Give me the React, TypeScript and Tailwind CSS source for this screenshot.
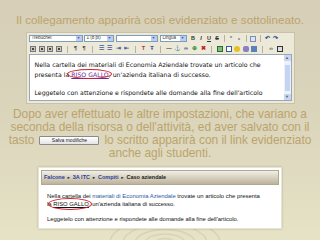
import React from "react";

const Sel = ({ w, label }: { w: string; label: string }) => (
  <div className={`flex h-[7px] items-center border border-[#7f9db9] bg-white ${w}`}>
    <span className="flex-1 truncate pl-[2px] text-[4.5px] leading-none text-[#333]">{label}</span>
    <span className="flex h-full w-[6px] items-center justify-center bg-[#b9cdf5] text-[3.5px] leading-none text-[#3b5a9a]">▼</span>
  </div>
);

const Ic = ({ c, children }: { c?: string; children?: React.ReactNode }) => (
  <span className={`flex h-[7px] w-[7px] items-center justify-center text-[5.5px] font-bold leading-none ${c ?? "text-[#333]"}`}>
    {children}
  </span>
);

const Lines = () => (
  <span className="flex h-[7px] w-[7px] items-center justify-center">
    <span className="flex h-[6px] w-[6px] flex-col justify-between border border-[#777] bg-[#c8c8c8] p-[1px]">
      <span className="h-[1px] bg-[#444]" />
      <span className="h-[1px] bg-[#444]" />
    </span>
  </span>
);

const Box = ({ c }: { c: string }) => (
  <span className="flex h-[7px] w-[7px] items-center justify-center">
    <span className={`h-[6px] w-[6px] ${c}`} />
  </span>
);

const Sep = ({ m }: { m?: string }) => <span className={`${m ?? "mx-[3px]"} h-[7px] w-px bg-[#b5b2a4]`} />;

const Ellipse = ({ cls }: { cls: string }) => (
  <span className={`pointer-events-none absolute rounded-[50%] border-[1.5px] border-[#d0202a] ${cls}`} />
);

export default function App() {
  return (
    <div
      className="relative flex h-[240px] w-[320px] flex-col items-center overflow-hidden bg-gradient-to-b from-[#d7cfb8] via-[#dbd5bc] to-[#e6e3c6]"
      style={{ fontFamily: '"Liberation Sans", Arial, sans-serif' }}
    >
      <svg className="pointer-events-none absolute left-[100px] top-[205px]" width="130" height="50" viewBox="0 0 130 50">
        {[10, 20, 30, 42, 55].map((r) => (
          <ellipse key={r} cx="65" cy="38" rx={r} ry={r * 0.45} fill="none" stroke="#d4cfb3" strokeWidth="1.5" opacity="0.8" />
        ))}
      </svg>

      <p className="relative mt-[13px] whitespace-nowrap text-[11.7px] leading-[14px] text-[#bba46c]">
        Il collegamento apparirà così evidenziato e sottolineato.
      </p>

      {/* Editor screenshot */}
      <div className="relative mt-[5px] flex w-[269px] flex-col border border-[#c9c2a8] bg-[#ece9d8]">
        <div className="flex h-[11px] items-center px-[2px]">
          <Sel w="w-[54px]" label="Trebuchet" />
          <Sel w="w-[30px] ml-[1px]" label="1 (8 pt)" />
          <Sel w="w-[42px] ml-[2px]" label="" />
          <Sel w="w-[27px] ml-[2px]" label="Lingua" />
          <div className="ml-[3px] flex items-center gap-[1px]">
            <Ic>B</Ic>
            <Ic><i>I</i></Ic>
            <Ic><u>U</u></Ic>
            <Ic><s>S</s></Ic>
            <Sep m="mx-[2px]" />
            <Ic c="text-[#555]">ˣ</Ic>
            <Ic c="text-[#555]">ₓ</Ic>
            <Sep m="mx-[2px]" />
            <Box c="border border-[#7a8fb8] bg-[#dde4f2]" />
            <Sep m="mx-[2px]" />
            <Ic c="text-[#2b4f8f]">↶</Ic>
            <Ic c="text-[#2b4f8f]">↷</Ic>
          </div>
        </div>
        <div className="flex h-[10px] items-center gap-[1.5px] px-[3px]">
          <Lines />
          <Lines />
          <Lines />
          <Lines />
          <Sep />
          <Ic c="text-[#444]">¶</Ic>
          <Ic c="text-[#444]">¶</Ic>
          <Sep />
          <Ic c="text-[#3a5aa0]">☰</Ic>
          <Ic c="text-[#3a5aa0]">☰</Ic>
          <Ic c="text-[#3a5aa0]">⇥</Ic>
          <Ic c="text-[#3a5aa0]">⇤</Ic>
          <Sep />
          <Ic c="text-[#b03030]">T</Ic>
          <Ic c="text-[#3050a0]">Ŧ</Ic>
          <Sep />
          <Ic c="text-[#444]">—</Ic>
          <Ic c="text-[#2b4f8f]">⚓</Ic>
          <Ic c="text-[#2b4f8f]">∞</Ic>
          <Ic c="text-[#3a8a3a]">⊕</Ic>
          <Ic c="text-[#c02020]">✖</Ic>
          <Sep />
          <Box c="border border-[#2d6a2d] bg-[#7cc07c]" />
          <Box c="border border-[#3a5aa0] bg-white" />
          <Box c="rounded-full bg-[#e8c020]" />
          <Box c="rounded-[2px] bg-[#8a7fc0]" />
          <Box c="bg-[#5a80c0]" />
          <Sep />
          <Ic c="text-[#444]">‹›</Ic>
          <Box c="border border-[#333] bg-[#ddd]" />
        </div>
        <div className="relative mx-[2px] mb-[2px] h-[47px] border border-[#9aa7b8] bg-white">
          <div
            className="px-[5px] pt-[5px] text-[6.2px] leading-[10px] text-[#111]"
            style={{ fontFamily: '"DejaVu Sans", Verdana, sans-serif' }}
          >
            <p>Nella cartella dei materiali di Economia Aziendale trovate un articolo che</p>
            <p>
              presenta la{" "}
              <span className="relative">
                <span className="text-[#6a2a9a] underline">RISO GALLO</span>
                <Ellipse cls="-left-[4px] -right-[3px] -top-[2px] -bottom-[1px]" />
              </span>
              , un'azienda italiana di successo.
            </p>
            <p className="mt-[8px]">Leggetelo con attenzione e rispondete alle domande alla fine dell'articolo</p>
          </div>
          <div className="absolute bottom-0 right-0 top-0 flex w-[7px] flex-col justify-between bg-[#eef2f8]">
            <span className="flex h-[6px] items-center justify-center bg-[#c8d6f0] text-[4px] text-[#4d6185]">▲</span>
            <span className="mx-[1px] my-[1px] max-h-[26px] flex-1 bg-[#c4d4f2]" />
            <span className="flex h-[6px] items-center justify-center bg-[#c8d6f0] text-[4px] text-[#4d6185]">▼</span>
          </div>
        </div>
      </div>

      <div className="relative mt-[4px] flex w-[310px] flex-col items-center text-[11.9px] leading-[13px] text-[#bba46c]">
        <p className="whitespace-nowrap">Dopo aver effettuato le altre impostazioni, che variano a</p>
        <p className="whitespace-nowrap">seconda della risorsa o dell'attività, ed aver salvato con il</p>
        <div className="flex h-[13px] items-center whitespace-nowrap">
          <span>tasto</span>
          <span className="mx-[5px] flex h-[9px] w-[60px] items-center justify-center rounded-[1px] border border-[#8a8a8a] bg-gradient-to-b from-white to-[#e4e4e4] text-[5px] leading-none text-[#222]">
            Salva modifiche
          </span>
          <span>lo scritto apparirà con il link evidenziato</span>
        </div>
        <p className="whitespace-nowrap">anche agli studenti.</p>
      </div>

      {/* Moodle screenshot */}
      <div className="relative mt-[7px] w-[244px] border border-[#e8e4d8] bg-white shadow-[0_0_2px_rgba(120,110,80,0.4)]">
        <div className="mx-[2px] mt-[2px] flex h-[15px] items-center border border-[#b0a890] bg-gradient-to-b from-[#f3efe6] to-[#bdb39c] px-[2px] text-[5.5px] font-bold leading-none text-[#222]">
          <span className="text-[#2a3f9a]">Falcone</span>
          <span className="mx-[2px] text-[4px]">►</span>
          <span className="text-[#2a3f9a]">3A ITC</span>
          <span className="mx-[2px] text-[4px]">►</span>
          <span className="text-[#2a3f9a]">Compiti</span>
          <span className="mx-[2px] text-[4px]">►</span>
          <span>Caso aziendale</span>
        </div>
        <div className="px-[8px] pb-[4px] pt-[8px] text-[5.9px] leading-[7.5px] text-[#111]">
          <p className="whitespace-nowrap">
            Nella cartella dei <span className="text-[#2a5aa0]">materiali di Economia Aziendale</span> trovate un articolo che presenta
          </p>
          <p>
            la{" "}
            <span className="relative">
              <span className="underline">RISO GALLO</span>
              <Ellipse cls="-left-[5px] -right-[3px] -top-[3px] -bottom-[3px]" />
            </span>
            , un'azienda italiana di successo.
          </p>
          <p className="mt-[8px]">Leggetelo con attenzione e rispondete alle domande alla fine dell'articolo.</p>
        </div>
      </div>
    </div>
  );
}
